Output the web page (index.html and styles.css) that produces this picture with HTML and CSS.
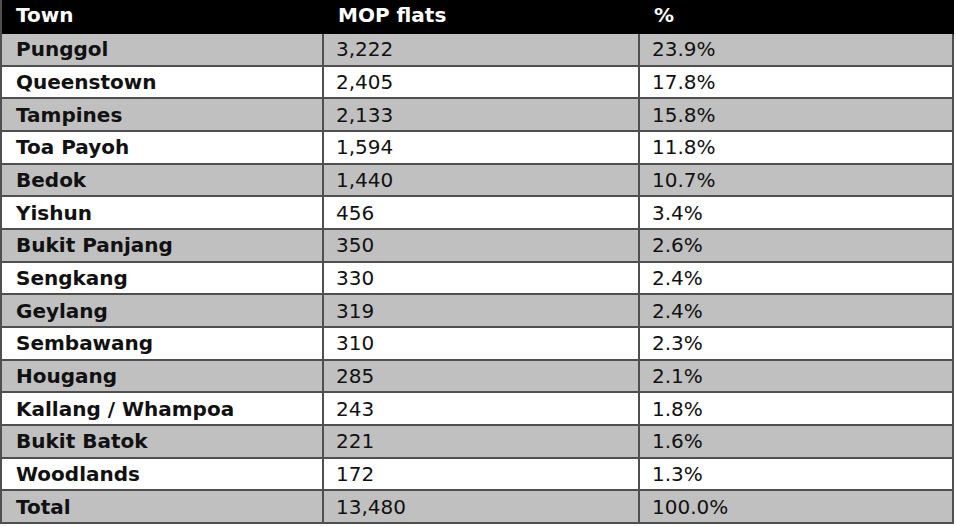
FILE: index.html
```html
<!DOCTYPE html>
<html lang="en">
<head>
<meta charset="utf-8">
<title>MOP flats by town</title>
<link rel="stylesheet" href="styles.css">
</head>
<body>
<table class="mop">
  <colgroup>
    <col class="c1"><col class="c2"><col class="c3">
  </colgroup>
  <thead>
    <tr class="head"><th>Town</th><th>MOP flats</th><th>%</th></tr>
  </thead>
  <tbody>
    <tr class="shade"><th>Punggol</th><td>3,222</td><td>23.9%</td></tr>
    <tr><th>Queenstown</th><td>2,405</td><td>17.8%</td></tr>
    <tr class="shade"><th>Tampines</th><td>2,133</td><td>15.8%</td></tr>
    <tr><th>Toa Payoh</th><td>1,594</td><td>11.8%</td></tr>
    <tr class="shade"><th>Bedok</th><td>1,440</td><td>10.7%</td></tr>
    <tr><th>Yishun</th><td>456</td><td>3.4%</td></tr>
    <tr class="shade"><th>Bukit Panjang</th><td>350</td><td>2.6%</td></tr>
    <tr><th>Sengkang</th><td>330</td><td>2.4%</td></tr>
    <tr class="shade"><th>Geylang</th><td>319</td><td>2.4%</td></tr>
    <tr><th>Sembawang</th><td>310</td><td>2.3%</td></tr>
    <tr class="shade"><th>Hougang</th><td>285</td><td>2.1%</td></tr>
    <tr><th>Kallang / Whampoa</th><td>243</td><td>1.8%</td></tr>
    <tr class="shade"><th>Bukit Batok</th><td>221</td><td>1.6%</td></tr>
    <tr><th>Woodlands</th><td>172</td><td>1.3%</td></tr>
    <tr class="shade"><th>Total</th><td>13,480</td><td>100.0%</td></tr>
  </tbody>
</table>
</body>
</html>
```

FILE: styles.css
```css
html, body {
  margin: 0;
  padding: 0;
  background: #ffffff;
}

.mop {
  border-collapse: separate;
  border-spacing: 0;
  table-layout: fixed;
  width: 954px;
  border-left: 2px solid #4f4f4f;
  font-family: "DejaVu Sans", "Liberation Sans", sans-serif;
  font-size: 20px;
  color: #111111;
}

.mop .c1 { width: 322px; }
.mop .c2 { width: 316px; }
.mop .c3 { width: 314px; }

.mop th,
.mop td {
  box-sizing: border-box;
  padding: 0 0 0 12px;
  text-align: left;
  vertical-align: middle;
  line-height: 24px;
  white-space: nowrap;
  border-right: 2px solid #4f4f4f;
  border-bottom: 2px solid #4f4f4f;
}

.mop th {
  font-weight: 700;
  padding-left: 14px;
}

.mop td {
  font-weight: 400;
}

.mop tbody tr {
  height: 32.67px;
  background: #ffffff;
}

.mop tbody tr.shade {
  background: #c0c0c0;
}

.mop .head {
  height: 34px;
  background: #000000;
  color: #ffffff;
}

.mop .head th {
  border-color: #000000;
  vertical-align: top;
  padding-top: 3px;
}
```
